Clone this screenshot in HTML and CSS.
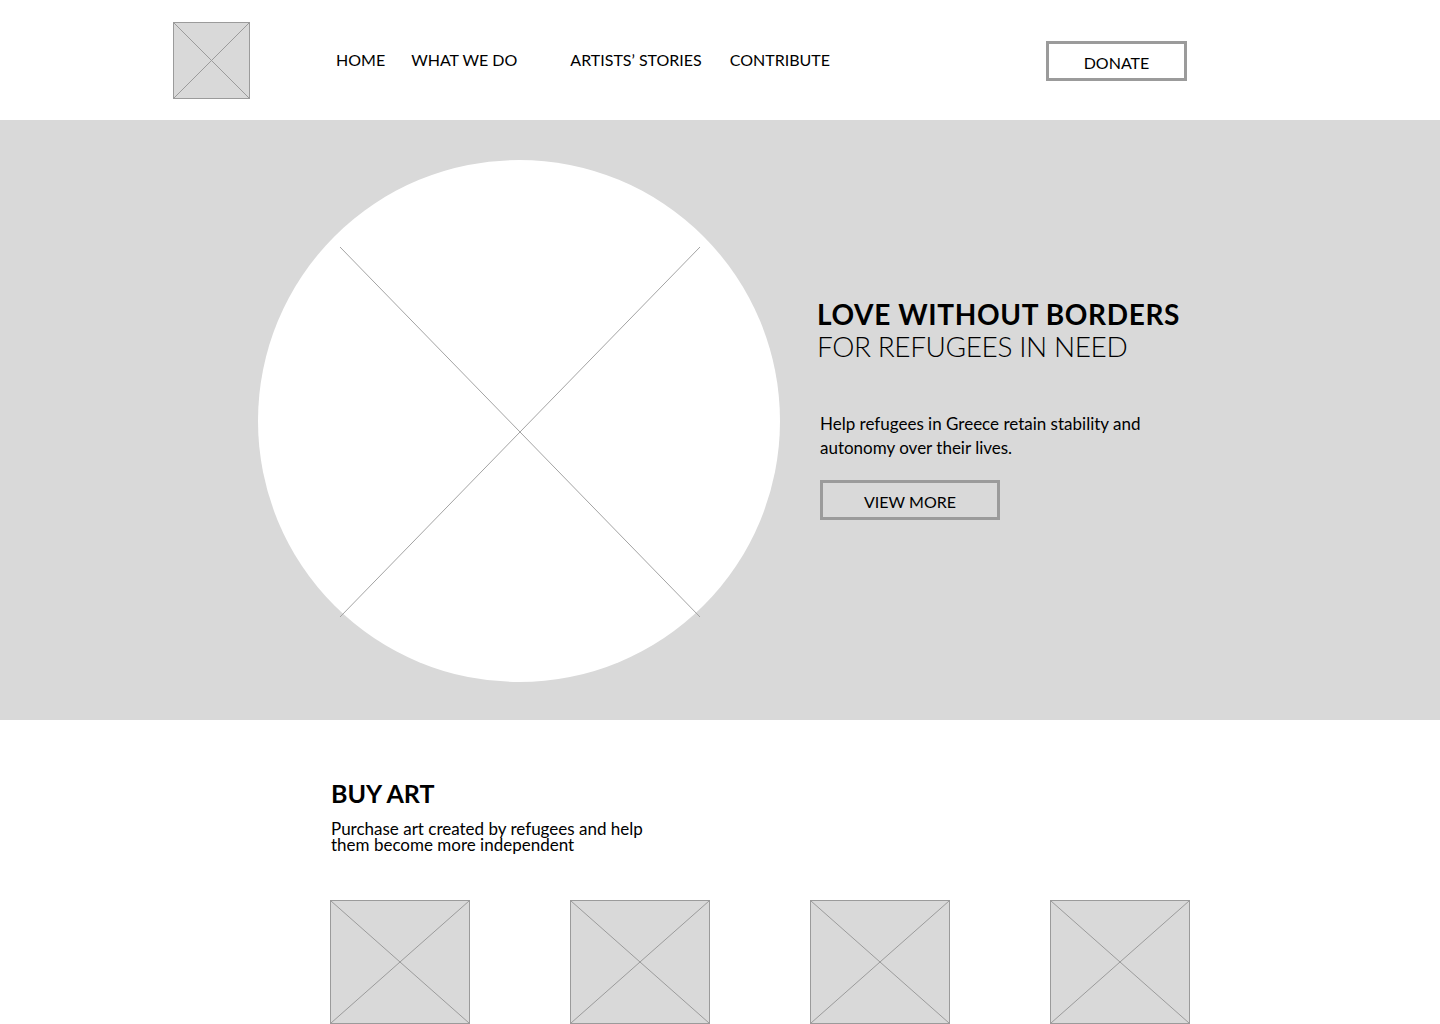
FILE: index.html
```html
<!DOCTYPE html>
<html lang="en">
<head>
<meta charset="utf-8">
<title>Love Without Borders</title>
<link rel="stylesheet" href="styles.css">
</head>
<body>
<header class="header">
  <div class="logo ph">
    <svg class="ph-x" viewBox="0 0 100 100" preserveAspectRatio="none"><line x1="0" y1="0" x2="100" y2="100"/><line x1="100" y1="0" x2="0" y2="100"/></svg>
  </div>
  <nav class="nav">
    <a class="nav-home" href="#">HOME</a>
    <a class="nav-what" href="#">WHAT WE DO</a>
    <a class="nav-artists" href="#">ARTISTS’ STORIES</a>
    <a href="#">CONTRIBUTE</a>
  </nav>
  <a class="btn donate" href="#">DONATE</a>
</header>

<section class="hero">
  <div class="hero-img">
    <svg class="hero-x" width="522" height="522" viewBox="0 0 522 522"><line x1="82" y1="87" x2="442" y2="457"/><line x1="442" y1="87" x2="82" y2="457"/></svg>
  </div>
  <div class="hero-text">
    <h1 class="hero-title"><strong>LOVE WITHOUT BORDERS</strong><span>FOR REFUGEES IN NEED</span></h1>
    <p class="hero-copy">Help refugees in Greece retain stability and autonomy over their lives.</p>
    <a class="btn view-more" href="#">VIEW MORE</a>
  </div>
</section>

<section class="buy">
  <h2 class="buy-title">BUY ART</h2>
  <p class="buy-copy">Purchase art created by refugees and help them become more independent</p>
  <div class="gallery">
    <div class="art ph"><svg class="ph-x" viewBox="0 0 100 100" preserveAspectRatio="none"><line x1="0" y1="0" x2="100" y2="100"/><line x1="100" y1="0" x2="0" y2="100"/></svg></div>
    <div class="art ph"><svg class="ph-x" viewBox="0 0 100 100" preserveAspectRatio="none"><line x1="0" y1="0" x2="100" y2="100"/><line x1="100" y1="0" x2="0" y2="100"/></svg></div>
    <div class="art ph"><svg class="ph-x" viewBox="0 0 100 100" preserveAspectRatio="none"><line x1="0" y1="0" x2="100" y2="100"/><line x1="100" y1="0" x2="0" y2="100"/></svg></div>
    <div class="art ph"><svg class="ph-x" viewBox="0 0 100 100" preserveAspectRatio="none"><line x1="0" y1="0" x2="100" y2="100"/><line x1="100" y1="0" x2="0" y2="100"/></svg></div>
  </div>
</section>
</body>
</html>
```

FILE: styles.css
```css
* { box-sizing: border-box; }
html, body { margin: 0; padding: 0; }
body {
  font-family: Lato, "Noto Sans", "Liberation Sans", sans-serif;
  color: #000;
  background: #fff;
  width: 1440px;
  overflow: hidden;
}
a { color: #000; text-decoration: none; }

.ph {
  background: #d9d9d9;
  border: 1px solid #9b9b9b;
  position: relative;
}
.ph-x {
  display: block;
  width: 100%;
  height: 100%;
}
.ph-x line { stroke: #9b9b9b; stroke-width: 1; vector-effect: non-scaling-stroke; }

.header {
  height: 120px;
  display: flex;
  align-items: flex-start;
  padding-left: 173px;
}
.logo {
  width: 77px;
  height: 77px;
  margin-top: 22px;
}
.nav {
  display: flex;
  margin-left: 86px;
  margin-top: 50px;
  font-size: 16px;
  line-height: 20px;
}
.nav-home { margin-right: 26px; }
.nav-what { margin-right: 53px; }
.nav-artists { margin-right: 28px; }

.btn {
  display: flex;
  align-items: center;
  justify-content: center;
  border: 3px solid #9b9b9b;
  font-size: 16px;
  line-height: 20px;
}
.donate {
  width: 141px;
  height: 40px;
  margin-top: 41px;
  margin-left: auto;
  margin-right: 253px;
  padding-top: 3px;
}

.hero {
  height: 600px;
  background: #d9d9d9;
  display: flex;
  align-items: flex-start;
  padding-left: 258px;
  padding-top: 40px;
}
.hero-img {
  width: 522px;
  height: 522px;
  border-radius: 50%;
  background: #fff;
  flex: none;
}
.hero-x { display: block; overflow: visible; }
.hero-x line { stroke: #a3a3a3; stroke-width: 1; }

.hero-text {
  margin-left: 37px;
  margin-top: 138px;
}
.hero-title {
  margin: 0;
  font-size: 28px;
  line-height: 32px;
  font-weight: 400;
}
.hero-title strong { display: block; font-weight: 700; letter-spacing: 0.65px; }
.hero-title span { display: block; font-weight: 300; letter-spacing: -0.4px; }
.hero-copy {
  margin: 50px 0 0 3px;
  width: 350px;
  font-size: 17px;
  line-height: 24px;
}
.view-more {
  width: 180px;
  height: 40px;
  margin: 20px 0 0 3px;
  padding-top: 3px;
}

.buy {
  padding: 57px 0 0 331px;
}
.buy-title {
  margin: 0;
  font-size: 25px;
  line-height: 32px;
  font-weight: 700;
}
.buy-copy {
  margin: 12px 0 0;
  width: 330px;
  font-size: 17px;
  line-height: 16px;
}
.gallery {
  display: flex;
  gap: 100px;
  margin-top: 47px;
  margin-left: -1px;
}
.art {
  width: 140px;
  height: 124px;
}
```
